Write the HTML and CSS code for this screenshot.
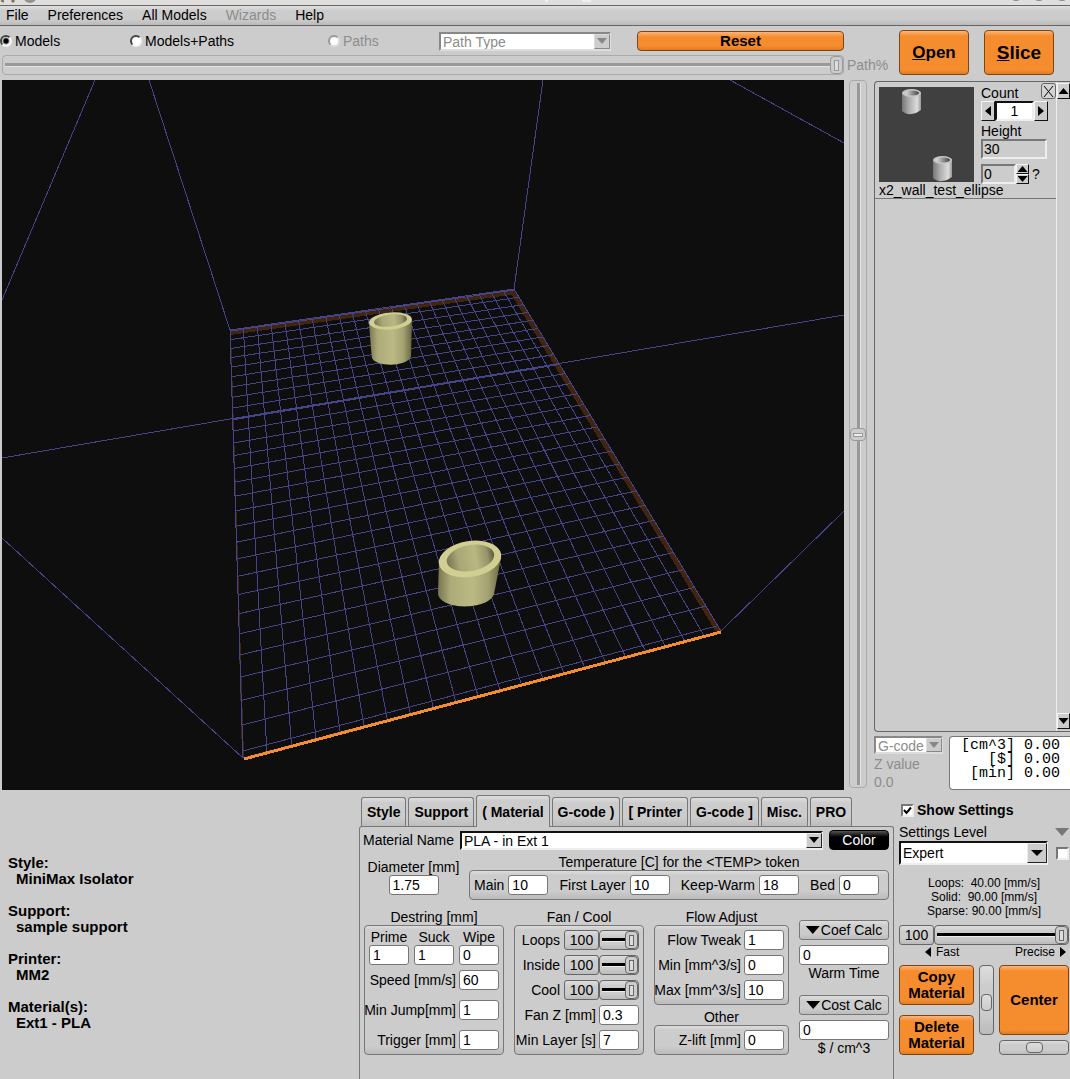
FILE: index.html
```html
<!DOCTYPE html>
<html lang="en">
<head>
<meta charset="utf-8">
<title>Slicer</title>
<link rel="stylesheet" href="styles.css">
</head>
<body>
<div class="titlebar">
  <svg class="title-left" width="40" height="5" aria-hidden="true"><path d="M3 0l-1 2M12 0l2 2" stroke="#7a735c" stroke-width="3"/><ellipse cx="30" cy="-2" rx="6" ry="5" fill="#96938f"/></svg>
  <svg class="title-mid" width="48" height="5" aria-hidden="true"><path d="M3 0v1h2M40 0v1h8" stroke="#fff" stroke-width="1" fill="none"/></svg>
  <svg class="title-right" width="60" height="5" aria-hidden="true"><g fill="#8c8986"><ellipse cx="6" cy="-4" rx="6" ry="5"/><ellipse cx="29" cy="-4" rx="6" ry="5"/><ellipse cx="52" cy="-4" rx="6" ry="5"/></g></svg>
</div>
<nav class="menubar">
  <button type="button">File</button>
  <button type="button">Preferences</button>
  <button type="button">All Models</button>
  <button type="button" disabled>Wizards</button>
  <button type="button">Help</button>
</nav>

<main class="workspace">
  <section class="view">
    <div class="toolbar">
      <label class="radio"><input type="radio" name="show" checked>Models</label>
      <label class="radio"><input type="radio" name="show">Models+Paths</label>
      <label class="radio off"><input type="radio" name="show" disabled>Paths</label>
      <span class="combo dim"><select aria-label="Path type" disabled><option>Path Type</option></select><i class="drop"></i></span>
      <div class="reset-cell"><button type="button" class="orange reset">Reset</button></div>
    </div>
    <div class="path-row">
      <input class="slider off" id="path" type="range" value="100" disabled>
      <label for="path">Path%</label>
    </div>
    <div class="stage">
      <svg class="scene" viewBox="2 80 842 710" preserveAspectRatio="xMidYMid slice" role="img" aria-label="Print bed with two models">
        <defs>
          <linearGradient id="side"><stop offset="0" stop-color="#77754f"/><stop offset=".2" stop-color="#adab79"/><stop offset=".55" stop-color="#bbb983"/><stop offset=".8" stop-color="#a3a172"/><stop offset="1" stop-color="#66643f"/></linearGradient>
          <linearGradient id="bore"><stop offset="0" stop-color="#77754f"/><stop offset=".25" stop-color="#a9a776"/><stop offset=".6" stop-color="#b9b781"/><stop offset=".85" stop-color="#96946a"/><stop offset="1" stop-color="#5c5a3c"/></linearGradient>
        </defs>
        <g fill="#42240f" shape-rendering="crispEdges">
          <path d="M230 330L514 290L516 294L231 335Z"/>
          <path d="M514 290L721 630L716 632L511 294Z"/>
          <path d="M231 331L244 757L242 757L233 420L230 336Z"/>
        </g>
        <g id="grid" class="wire"></g>
        <g class="wire">
          <path d="M95 80L2 300M149 80L230 330M543 80L514 289M730 80L844 143M2 458L230 419L562 363L844 315M2 538L243 758M844 511L721 631"/>
        </g>
        <path d="M244 759L721 632" stroke="#f58d2f" stroke-width="3" shape-rendering="crispEdges"/>
        <g>
          <path d="M369 321C370 337 371 350 372 358C376 367 406 367 411 357L412 319Z" fill="url(#side)"/>
          <ellipse cx="390.500" cy="321" rx="21.500" ry="8.500" transform="rotate(-5 390.500 321)" fill="#d0ce90"/>
          <ellipse cx="390.500" cy="320.500" rx="16.500" ry="6" transform="rotate(-7 390.500 320.500)" fill="url(#bore)"/>
          <path d="M439 561L438 594C441 611 489 610 494 594L501 558Z" fill="url(#side)"/>
          <ellipse cx="470" cy="559" rx="31.500" ry="18" transform="rotate(-9 470 559)" fill="#d0ce90"/>
          <ellipse cx="470.500" cy="558" rx="24" ry="13" transform="rotate(-10 470.500 558)" fill="url(#bore)"/>
        </g>
      </svg>
      <input class="slider tall off" type="range" value="50" aria-label="Layer height" disabled>
    </div>
  </section>

  <aside class="side">
    <div class="actions">
      <button type="button" class="orange open"><u>O</u>pen</button>
      <button type="button" class="orange slice"><u>S</u>lice</button>
    </div>
    <div class="models">
      <div class="model-list">
        <article class="model">
          <div class="model-body">
            <svg class="thumb" viewBox="0 0 95 95" aria-hidden="true">
              <defs><linearGradient id="tube"><stop offset="0" stop-color="#777"/><stop offset=".35" stop-color="#aaa"/><stop offset=".8" stop-color="#ddd"/><stop offset="1" stop-color="#999"/></linearGradient>
              <linearGradient id="hole"><stop offset="0" stop-color="#ddd"/><stop offset="1" stop-color="#444"/></linearGradient></defs>
              <g id="cup"><path d="M23 6V24Q28 29 37 26L42 23V5Z" fill="url(#tube)"/><ellipse cx="32.500" cy="6" rx="9.500" ry="4" fill="#c4c4c4"/><ellipse cx="33" cy="6" rx="7" ry="2.500" fill="url(#hole)"/></g>
              <use href="#cup" x="31" y="67"/>
            </svg>
            <div class="model-fields">
              <label for="count">Count</label>
              <div class="stepper">
                <button type="button" aria-label="Fewer"><i class="tri left"></i></button>
                <input id="count" type="text" value="1">
                <button type="button" aria-label="More"><i class="tri right"></i></button>
              </div>
              <label for="height">Height</label>
              <input class="sunk" id="height" type="text" value="30">
              <div class="spin">
                <input class="sunk" type="text" value="0" aria-label="Rotation">
                <span class="spin-buttons"><button type="button" aria-label="Up"><i class="tri up"></i></button><button type="button" aria-label="Down"><i class="tri down"></i></button></span>
                <span>?</span>
              </div>
            </div>
            <button type="button" class="close" aria-label="Remove"><svg width="11" height="11" viewBox="0 0 11 11"><path d="M1 0L10 11M10 0L1 11" stroke="#000"/></svg></button>
          </div>
          <div class="model-name">x2_wall_test_ellipse</div>
        </article>
      </div>
      <div class="scrollbar">
        <button type="button" aria-label="Scroll up"><i class="tri up"></i></button>
        <button type="button" aria-label="Scroll down"><i class="tri down"></i></button>
      </div>
    </div>
    <div class="output">
      <div class="zvalue">
        <span class="combo dim"><select aria-label="Output" disabled><option>G-code</option></select><i class="drop"></i></span>
        <span>Z value</span>
        <span>0.0</span>
      </div>
      <pre class="totals">[cm^3] 0.00
  [$] 0.00
 [min] 0.00</pre>
    </div>
  </aside>
</main>

<section class="settings">
  <dl class="summary">
    <dt>Style:</dt><dd>MiniMax Isolator</dd>
    <dt>Support:</dt><dd>sample support</dd>
    <dt>Printer:</dt><dd>MM2</dd>
    <dt>Material(s):</dt><dd>Ext1 - PLA</dd>
  </dl>

  <div class="tabbed">
    <div class="tabs" role="tablist">
      <button type="button" role="tab">Style</button>
      <button type="button" role="tab">Support</button>
      <button type="button" role="tab" class="active" aria-selected="true">( Material</button>
      <button type="button" role="tab">G-code )</button>
      <button type="button" role="tab">[ Printer</button>
      <button type="button" role="tab">G-code ]</button>
      <button type="button" role="tab">Misc.</button>
      <button type="button" role="tab">PRO</button>
    </div>
    <div class="panel">
      <div class="name-row">
        <label for="material">Material Name</label>
        <span class="combo"><select id="material"><option>PLA - in Ext 1</option></select><i class="drop"></i></span>
        <button type="button" class="color">Color</button>
      </div>
      <div class="temp-row">
        <div class="diameter">
          <label for="diameter">Diameter [mm]</label>
          <input class="field" id="diameter" type="text" value="1.75">
        </div>
        <div class="temps">
          <span class="caption">Temperature [C] for the &lt;TEMP&gt; token</span>
          <div class="box temp-box">
            <label>Main<input class="field" type="text" value="10"></label>
            <label>First Layer<input class="field" type="text" value="10"></label>
            <label>Keep-Warm<input class="field" type="text" value="18"></label>
            <label>Bed<input class="field" type="text" value="0"></label>
          </div>
        </div>
      </div>
      <div class="groups">
        <div class="group">
          <span class="caption">Destring [mm]</span>
          <div class="box destring">
            <div class="triple">
              <label>Prime<input class="field" type="text" value="1"></label>
              <label>Suck<input class="field" type="text" value="1"></label>
              <label>Wipe<input class="field" type="text" value="0"></label>
            </div>
            <label class="line">Speed [mm/s]<input class="field" type="text" value="60"></label>
            <label class="line apart">Min Jump[mm]<input class="field" type="text" value="1"></label>
            <label class="line apart">Trigger [mm]<input class="field" type="text" value="1"></label>
          </div>
        </div>
        <div class="group">
          <span class="caption">Fan / Cool</span>
          <div class="box">
            <label class="line">Loops<output class="value">100</output><input class="slider" type="range" value="100"></label>
            <label class="line">Inside<output class="value">100</output><input class="slider" type="range" value="100"></label>
            <label class="line">Cool<output class="value">100</output><input class="slider" type="range" value="100"></label>
            <label class="line">Fan Z [mm]<input class="field" type="text" value="0.3"></label>
            <label class="line">Min Layer [s]<input class="field" type="text" value="7"></label>
          </div>
        </div>
        <div class="group">
          <span class="caption">Flow Adjust</span>
          <div class="box">
            <label class="line">Flow Tweak<input class="field" type="text" value="1"></label>
            <label class="line">Min [mm^3/s]<input class="field" type="text" value="0"></label>
            <label class="line">Max [mm^3/s]<input class="field" type="text" value="10"></label>
          </div>
          <span class="caption other">Other</span>
          <div class="box">
            <label class="line">Z-lift [mm]<input class="field" type="text" value="0"></label>
          </div>
        </div>
        <div class="group calcs">
          <div class="calc">
            <button type="button" class="plain"><i class="tri down big"></i>Coef Calc</button>
            <input class="field" id="warm" type="text" value="0">
            <label for="warm">Warm Time</label>
          </div>
          <div class="calc">
            <button type="button" class="plain"><i class="tri down big"></i>Cost Calc</button>
            <input class="field" id="cost" type="text" value="0">
            <label for="cost">$ / cm^3</label>
          </div>
        </div>
      </div>
    </div>
  </div>

  <div class="levels">
    <label class="show"><input type="checkbox" checked>Show Settings</label>
    <div class="level-head"><label for="level">Settings Level</label><i class="tri down big gray"></i></div>
    <div class="level-row">
      <span class="combo large"><select id="level"><option>Expert</option></select><i class="drop"></i></span>
      <input type="checkbox" aria-label="Lock level">
    </div>
    <pre class="speeds">Loops:  40.00 [mm/s]
Solid:  90.00 [mm/s]
Sparse: 90.00 [mm/s]</pre>
    <div class="quality">
      <output class="value">100</output><input class="slider" type="range" value="100" aria-label="Quality">
    </div>
    <div class="quality-ends"><span><i class="tri left"></i>Fast</span><span>Precise<i class="tri right"></i></span></div>
    <div class="pad">
      <button type="button" class="orange copy">Copy Material</button>
      <button type="button" class="orange delete">Delete Material</button>
      <input class="slider tall roll vroll" type="range" value="54" aria-label="Tilt">
      <button type="button" class="orange center">Center</button>
      <input class="slider roll hroll" type="range" value="50" aria-label="Turn">
    </div>
  </div>
</section>
<script src="scene.js"></script>
</body>
</html>
```
FILE: styles.css
```css
* { box-sizing: border-box; }

body {
  margin: 0;
  min-height: 100vh;
  display: flex;
  flex-direction: column;
  background: #ccc;
  color: #000;
  font: 14px/16px "Liberation Sans", Arial, sans-serif;
  overflow-x: hidden;
}

button, input, select { margin: 0; font: inherit; color: inherit; border-radius: 0; }
button { padding: 0; white-space: nowrap; }
label, span { white-space: nowrap; }

/* title and menu */
.titlebar { display: flex; height: 5px; background: #e0dfdd; }
.title-mid { margin-left: auto; }
.title-right { margin-left: 419px; }
.menubar {
  display: flex;
  gap: 19px;
  height: 21px;
  padding: 0 6px;
  border-top: 1px solid #666;
  border-bottom: 1px solid #666;
  background: linear-gradient(#e0e0e0, #ccc 25%, #ccc 70%, #bbb);
}
.menubar button { padding-bottom: 2px; border: 0; background: none; }
.menubar button:disabled { color: #8c8c8c; }

/* workspace */
.workspace { flex: 1; display: grid; grid-template-columns: minmax(0, 1fr) 196px; min-height: 600px; }
.view { display: flex; flex-direction: column; min-width: 0; }
.toolbar {
  display: grid;
  grid-template-columns: 130fr 198fr 111fr 172fr 233fr;
  align-items: center;
  height: 29px;
  padding: 1px 30px 0 0;
}
.radio { display: flex; align-items: center; gap: 3px; }
.radio input {
  appearance: none;
  width: 12px;
  height: 12px;
  border: 2px solid;
  border-color: #444 #f2f2f2 #f2f2f2 #444;
  border-radius: 50%;
  background: #fff;
}
.radio input:checked { background: radial-gradient(#000 2px, #fff 4px); }
.off { color: #8c8c8c; }
.radio.off input { border-color: #999 #ddd #ddd #999; }
.reset-cell { padding-left: 26px; }
.reset { width: 100%; height: 20px; }

.path-row { display: flex; align-items: center; gap: 3px; height: 20px; padding-left: 2px; color: #8c8c8c; }
.path-row .slider { flex: 1; height: 20px; }
.path-row label { width: 27px; }

.stage { flex: 1; display: grid; grid-template-columns: minmax(0, 1fr) 18px; gap: 5px; padding: 5px 7px 0 2px; min-height: 0; }
.scene { width: 100%; height: 100%; min-height: 0; background: #0e0e0e; }
.wire path { stroke: #444488; fill: none; shape-rendering: crispEdges; }
.wire .axis { stroke-width: 2; }

/* orange buttons */
.orange {
  border: 1px solid #7a4617;
  border-radius: 4px;
  background: linear-gradient(#fbb57a, #f58d2f 5px, #f58d2f calc(100% - 4px), #e07c22);
  font-size: 15px;
  font-weight: bold;
}

/* combo boxes */
.combo { position: relative; display: flex; }
.combo select {
  appearance: none;
  width: 100%;
  height: 19px;
  padding: 0 16px 0 2px;
  border: 2px solid;
  border-color: #111 #eee #eee #111;
  background: #fff;
}
.drop {
  position: absolute;
  top: 2px;
  right: 1px;
  bottom: 2px;
  width: 16px;
  border: 1px solid;
  border-color: #eee #222 #222 #eee;
  background: #ccc;
  pointer-events: none;
}
.drop::before {
  content: "";
  position: absolute;
  inset: 0;
  width: 10px;
  height: 6px;
  margin: auto;
  background: #000;
  clip-path: polygon(0 0, 100% 0, 50% 100%);
}
.combo.dim select { color: #8c8c8c; border-color: #888 #ddd #ddd #888; opacity: 1; }
.dim .drop { border-color: #ddd #888 #888 #ddd; }
.dim .drop::before { background: #888; }
.combo.large select { height: 24px; }
.combo.large .drop { width: 20px; }
.combo.large .drop::before { width: 12px; }

/* sliders */
.slider {
  appearance: none;
  display: block;
  min-width: 0;
  width: 40px;
  height: 20px;
  border: 1px solid #666;
  border-radius: 4px;
  background:
    linear-gradient(#000, #000) 2px 7px / calc(100% - 4px) 3px no-repeat,
    linear-gradient(#eee, #eee) 2px 10px / calc(100% - 4px) 1px no-repeat,
    linear-gradient(#ddd, #ccc 30%, #ccc 70%, #bbb);
}
.slider::-webkit-slider-thumb {
  appearance: none;
  width: 13px;
  height: 18px;
  border: 1px solid #666;
  border-radius: 4px;
  background:
    linear-gradient(#ddd, #ddd) 4px 4px / 3px 9px no-repeat,
    linear-gradient(#666, #666) 3px 3px / 5px 11px no-repeat,
    #ccc;
}
.slider.off {
  border-color: #aaa;
  background:
    linear-gradient(#999, #999) 2px 7px / calc(100% - 4px) 3px no-repeat,
    linear-gradient(#e4e4e4, #e4e4e4) 2px 10px / calc(100% - 4px) 1px no-repeat,
    #ccc;
}
.slider.off::-webkit-slider-thumb {
  border-color: #999;
  background:
    linear-gradient(#ddd, #ddd) 4px 4px / 3px 9px no-repeat,
    linear-gradient(#999, #999) 3px 3px / 5px 11px no-repeat,
    #ccc;
}
.slider.tall { writing-mode: vertical-lr; }
.slider.tall.off {
  width: 18px;
  height: calc(100% - 2px);
  background:
    linear-gradient(#999, #999) 7px 2px / 3px calc(100% - 4px) no-repeat,
    linear-gradient(#e4e4e4, #e4e4e4) 10px 2px / 1px calc(100% - 4px) no-repeat,
    #ccc;
}
.slider.tall.off::-webkit-slider-thumb {
  width: 16px;
  height: 13px;
  background:
    linear-gradient(#eee, #eee) 3px 5px / 8px 2px no-repeat,
    linear-gradient(#999, #999) 2px 4px / 10px 4px no-repeat,
    #ccc;
}
.slider.roll { background: linear-gradient(#ddd, #ccc 30%, #ccc 70%, #bbb); }
.slider.roll::-webkit-slider-thumb { width: 17px; height: 11px; background: linear-gradient(#ddd, #ccc); }
.slider.vroll::-webkit-slider-thumb { width: 11px; height: 17px; }

/* triangles */
.tri { display: inline-block; flex: none; background: #000; }
.tri.left, .tri.right { width: 6px; height: 10px; }
.tri.up, .tri.down { width: 10px; height: 6px; }
.tri.left { clip-path: polygon(100% 0, 100% 100%, 0 50%); }
.tri.right { clip-path: polygon(0 0, 100% 50%, 0 100%); }
.tri.up { clip-path: polygon(0 100%, 50% 0, 100% 100%); }
.tri.down { clip-path: polygon(0 0, 100% 0, 50% 100%); }
.tri.big { width: 14px; height: 8px; }
.tri.gray { background: #777; }

/* model column */
.side { display: flex; flex-direction: column; }
.actions { display: flex; gap: 15px; padding: 4px 0 6px 25px; }
.actions button { width: 70px; height: 45px; }
.open { font-size: 17px; }
.slice { font-size: 19px; }
.models {
  flex: 1;
  display: flex;
  border: 1px solid #666;
  border-right: 0;
  border-radius: 4px 0 0 4px;
}
.model-list { flex: 1; min-width: 0; }
.model { border-bottom: 1px solid #777; padding: 1px 0 0 4px; }
.model-body { display: flex; height: 99px; padding-top: 4px; gap: 7px; position: relative; }
.thumb { width: 95px; height: 95px; background: #404040; }
.model-fields { display: flex; flex-direction: column; margin-top: -2px; }
.stepper { display: flex; height: 20px; margin-bottom: 2px; }
.stepper input {
  width: 39px;
  padding: 0;
  border: 2px solid;
  border-color: #111 #eee #eee #111;
  background: #fff;
  text-align: center;
}
.stepper button, .spin-buttons button, .scrollbar button {
  display: grid;
  place-items: center;
  border: 1px solid;
  border-color: #f4f4f4 #111 #111 #f4f4f4;
  background: #ccc;
}
.stepper button { width: 14px; }
.sunk {
  width: 66px;
  height: 20px;
  padding: 0 1px;
  border: 2px solid;
  border-color: #777 #eee #eee #777;
  background: #ccc;
}
.spin { display: flex; align-items: center; margin-top: 5px; }
.spin .sunk { width: 35px; }
.spin-buttons { display: flex; flex-direction: column; margin-right: 3px; }
.spin-buttons button { width: 13px; height: 10px; }
.close {
  position: absolute;
  top: 0;
  right: 0;
  display: grid;
  place-items: center;
  width: 15px;
  height: 16px;
  border: 1px solid #666;
  border-radius: 3px;
  background: #d4d4d4;
}
.scrollbar {
  display: flex;
  flex-direction: column;
  justify-content: space-between;
  width: 14px;
  padding: 1px 0 2px;
  border-left: 1px solid #eee;
}
.scrollbar button { height: 16px; }

.output { display: grid; grid-template-columns: 69px 1fr; gap: 6px; padding: 4px 0 0; }
.zvalue { display: flex; flex-direction: column; gap: 2px; color: #8c8c8c; }
.zvalue select { height: 18px; }
.totals {
  margin: 0;
  height: 54px;
  padding: 2px 10px 0 0;
  border: 1px solid #777;
  border-right: 0;
  border-radius: 4px 0 0 4px;
  background: #fff;
  font: 15px/14px "Liberation Mono", monospace;
  text-align: right;
}

/* bottom */
.settings { display: grid; grid-template-columns: minmax(0, 1fr) 535px 176px; min-height: 289px; }
.summary { margin: 0; padding: 65px 0 0 8px; font-size: 15px; font-weight: bold; }
.summary dd { margin: 0 0 16px 8px; }

.tabbed { display: flex; flex-direction: column; padding-top: 5px; }
.tabs { display: flex; align-items: flex-end; gap: 2px; padding-left: 2px; height: 31px; }
.tabs button {
  height: 29px;
  padding: 0 5px;
  border: 1px solid #777;
  border-bottom: 0;
  border-radius: 3px 3px 0 0;
  background: linear-gradient(#ddd, #ccc 5px, #ccc 70%, #bdbdbd);
  font-weight: bold;
}
.tabs .active { height: 32px; margin-bottom: -1px; position: relative; background: linear-gradient(#ddd, #ccc 5px); }
.panel { flex: 1; padding: 3px 4px 24px; border: 1px solid #777; border-bottom: 0; border-radius: 3px 3px 0 0; }

.name-row { display: flex; align-items: center; gap: 3px; height: 20px; }
.name-row label { flex: 0 0 94px; margin-left: -1px; }
.name-row .combo { flex: 1; }
.color {
  width: 60px;
  height: 20px;
  margin-left: 3px;
  border: 1px solid #000;
  border-radius: 4px;
  background: linear-gradient(#555, #000 6px);
  color: #fff;
}

.field {
  display: block;
  width: 40px;
  height: 20px;
  padding: 0 3px;
  border: 1px solid #777;
  border-radius: 3px;
  background: #fff;
}
.box {
  border: 1px solid #777;
  border-radius: 4px;
  background: linear-gradient(#ddd, #ccc 4px, #ccc calc(100% - 8px), #bbb);
}
.caption { display: block; text-align: center; }

.temp-row { display: flex; justify-content: space-between; padding-top: 4px; }
.diameter { display: flex; flex-direction: column; align-items: center; width: 99px; padding-top: 5px; }
.diameter .field { width: 50px; }
.temps { width: 420px; }
.temp-box { display: flex; justify-content: space-between; height: 30px; padding: 4px 9px 0 4px; }
.temp-box label { display: flex; align-items: center; gap: 4px; height: 20px; }

.groups { display: flex; justify-content: space-between; padding-top: 9px; }
.group { width: 140px; }
.group:nth-child(2) { width: 130px; }
.group:nth-child(3) { width: 135px; }
.group .box { display: flex; flex-direction: column; gap: 5px; padding: 4px; }
.triple { display: flex; justify-content: space-between; }
.triple label { display: flex; flex-direction: column; align-items: center; line-height: 15px; }
.line { display: flex; align-items: center; justify-content: flex-end; height: 20px; }
.line .field { flex: none; margin-left: 3px; }
.apart { margin-top: 5px; }
.value {
  flex: none;
  width: 35px;
  height: 20px;
  border: 1px solid #666;
  border-radius: 3px;
  background: linear-gradient(#ddd, #ccc 30%, #ccc 70%, #bbb);
  line-height: 18px;
  text-align: center;
}
.line .value { margin-left: 4px; }
.line .slider { flex: none; }
.other { padding-top: 4px; }
.group.calcs { display: flex; flex-direction: column; gap: 14px; width: 90px; padding-top: 11px; }
.calc { display: flex; flex-direction: column; align-items: center; }
.calc .field { width: 100%; margin-top: 5px; }
.plain {
  display: flex;
  align-items: center;
  justify-content: center;
  gap: 1px;
  width: 100%;
  height: 20px;
  border: 1px solid #777;
  border-radius: 3px;
  background: linear-gradient(#ddd, #ccc 30%, #ccc 70%, #bbb);
}

/* levels */
.levels { padding: 12px 1px 0 5px; }
.levels input[type="checkbox"] {
  appearance: none;
  width: 13px;
  height: 13px;
  border: 2px solid;
  border-color: #777 #eee #eee #777;
  background: #fff;
}
.levels input[type="checkbox"]:checked {
  background: #fff url("data:image/svg+xml,%3Csvg xmlns='http://www.w3.org/2000/svg' viewBox='0 0 9 9'%3E%3Cpath d='M1 4l2.500 3L8 1.500' stroke='%23000' stroke-width='2' fill='none'/%3E%3C/svg%3E") center / 9px 9px no-repeat;
}
.show { display: flex; align-items: center; gap: 3px; padding-left: 2px; font-weight: bold; }
.level-head { display: flex; align-items: center; justify-content: space-between; padding-top: 6px; }
.level-row { display: flex; align-items: center; justify-content: space-between; padding-top: 1px; }
.level-row .combo { width: 149px; }
.speeds { margin: 11px 0 7px; font: 12px/14px "Liberation Sans", Arial, sans-serif; text-align: center; }
.quality { display: flex; }
.quality .slider { flex: 1; }
.quality-ends { display: flex; justify-content: space-between; padding: 0 3px 0 26px; font-size: 12px; line-height: 14px; }
.quality-ends span { display: flex; align-items: center; gap: 5px; }
.pad {
  display: grid;
  grid-template-columns: 75px 15px 1fr;
  grid-template-rows: 40px 10px 20px 5px 15px;
  column-gap: 5px;
  padding-top: 6px;
}
.pad button { white-space: normal; }
.copy { grid-area: 1 / 1; padding: 0 5px; }
.delete { grid-area: 3 / 1 / 6 / 2; }
.pad .vroll { grid-area: 1 / 2 / 4 / 3; width: 15px; height: 70px; }
.center { grid-area: 1 / 3 / 4 / 4; }
.pad .hroll { grid-area: 5 / 3; width: 100%; height: 15px; }
```
FILE: scene.js
```js
// Draws the bed grid in perspective. The bed spans u (across) and v (depth)
// in grid cells; its four corners are given in scene coordinates.
(function () {
  var U0 = 0.05, U1 = 21.9, V0 = -9.13, V1 = 19.26;
  var A = [230, 330], B = [514, 289], C = [721, 631], D = [243, 758];

  var dx1 = B[0] - C[0], dx2 = D[0] - C[0], sx = A[0] - B[0] + C[0] - D[0];
  var dy1 = B[1] - C[1], dy2 = D[1] - C[1], sy = A[1] - B[1] + C[1] - D[1];
  var det = dx1 * dy2 - dx2 * dy1;
  var g = (sx * dy2 - dx2 * sy) / det;
  var h = (dx1 * sy - sx * dy1) / det;

  function project(u, v) {
    var s = (u - U0) / (U1 - U0), t = (v - V0) / (V1 - V0);
    var w = g * s + h * t + 1;
    return [
      ((B[0] - A[0] + g * B[0]) * s + (D[0] - A[0] + h * D[0]) * t + A[0]) / w,
      ((B[1] - A[1] + g * B[1]) * s + (D[1] - A[1] + h * D[1]) * t + A[1]) / w
    ];
  }

  function line(u0, v0, u1, v1, axis) {
    var p = project(u0, v0), q = project(u1, v1);
    var el = document.createElementNS("http://www.w3.org/2000/svg", "path");
    el.setAttribute("d", "M" + p.join(" ") + "L" + q.join(" "));
    if (axis) el.setAttribute("class", "axis");
    document.getElementById("grid").appendChild(el);
  }

  var u, v;
  line(U0, V0, U0, V1);
  line(U1, V0, U1, V1);
  line(U0, V0, U1, V0);
  line(U0, V1, U1, V1);
  for (u = 1; u < U1; u++) line(u, V0, u, V1);
  for (v = Math.ceil(V0); v < V1; v++) line(U0, v, U1, v, v === 0);
})();
```
